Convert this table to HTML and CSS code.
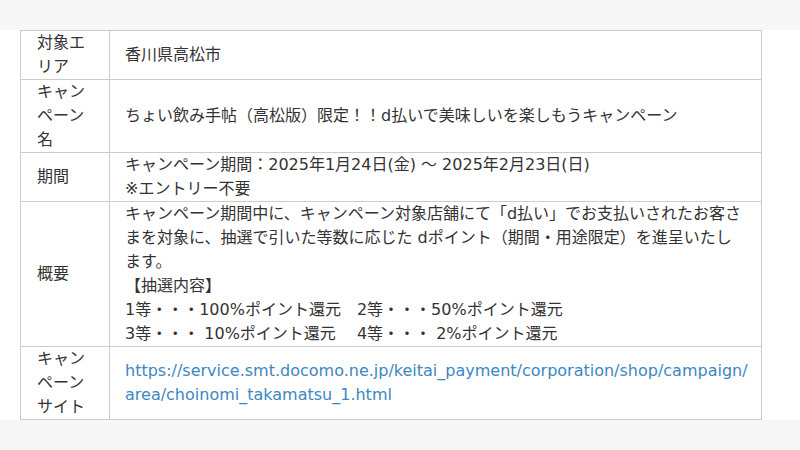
FILE: index.html
```html
<!DOCTYPE html>
<html lang="ja">
<head>
<meta charset="utf-8">
<link rel="stylesheet" href="styles.css">
</head>
<body>
<div class="top-band"></div>
<div class="wrap">
<table class="info">
<tr>
<th>対象エリア</th>
<td>香川県高松市</td>
</tr>
<tr>
<th>キャンペーン名</th>
<td>ちょい飲み手帖（高松版）限定！！d払いで美味しいを楽しもうキャンペーン</td>
</tr>
<tr>
<th>期間</th>
<td>キャンペーン期間：2025年1月24日(金) ～ 2025年2月23日(日)<br>※エントリー不要</td>
</tr>
<tr>
<th>概要</th>
<td>キャンペーン期間中に、キャンペーン対象店舗にて「d払い」でお支払いされたお客さまを対象に、抽選で引いた等数に応じた dポイント（期間・用途限定）を進呈いたします。<br>【抽選内容】<br>1等・・・100%ポイント還元　2等・・・50%ポイント還元<br>3等・・・ 10%ポイント還元　 4等・・・ 2%ポイント還元</td>
</tr>
<tr>
<th>キャンペーンサイト</th>
<td class="url-cell"><a class="link" href="#">https://service.smt.docomo.ne.jp/keitai_payment/corporation/shop/campaign/area/choinomi_takamatsu_1.html</a></td>
</tr>
</table>
</div>
<div class="bottom-band"></div>
</body>
</html>
```
FILE: styles.css
```css
html, body {
  margin: 0;
  padding: 0;
  background: #fff;
}
body {
  font-family: "DejaVu Sans", "Noto Sans CJK JP", sans-serif;
  font-size: 16px;
  line-height: 24px;
  color: #333;
}
.top-band {
  height: 30px;
  background: #f7f7f7;
}
.wrap {
  padding: 0 38px 0 20px;
}
.info {
  width: 742px;
  border-collapse: collapse;
  table-layout: fixed;
}
.info th,
.info td {
  border: 1px solid #ccc;
  vertical-align: middle;
  text-align: left;
  font-weight: normal;
  padding: 0;
}
.info th {
  width: 55px;
  padding: 0 17px 0 16px;
}
.info td {
  padding: 0 14.3px 0 15px;
  word-break: break-all;
}
.info td.url-cell {
  padding-right: 13px;
}
.link {
  color: #3d87c0;
  text-decoration: none;
}
.bottom-band {
  height: 30px;
  background: #f7f7f7;
}
```
